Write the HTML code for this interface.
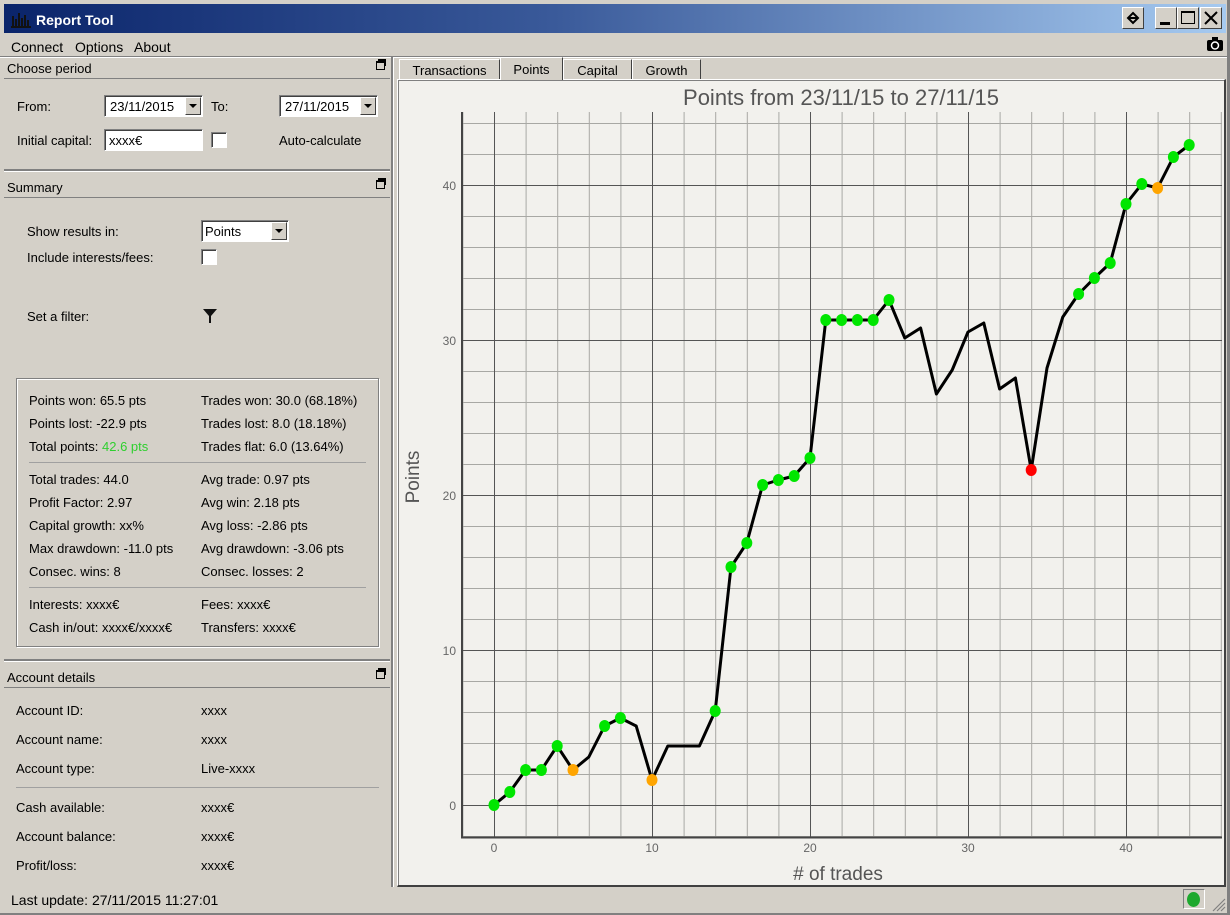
<!DOCTYPE html>
<html><head><meta charset="utf-8"><style>
*{margin:0;padding:0;box-sizing:border-box}
body{width:1230px;height:915px;background:#d4d0c8;font:13px "Liberation Sans",sans-serif;color:#000;position:relative;overflow:hidden}
.t{position:absolute;white-space:nowrap;line-height:16px;margin-top:1px}
.a{position:absolute}
.hdr{position:absolute;left:4px;width:386px;height:21px;border-bottom:1px solid #808080;}
.hdr span{position:absolute;left:3px;top:3px}
.fl{position:absolute;right:5px;top:3px;width:9px;height:9px;border:1px solid #000;border-top-width:2px}
.fl:before{content:"";position:absolute;left:1px;top:-4px;width:7px;height:5px;border:1px solid #000;border-top-width:2px;border-bottom:none;border-left:none}
.combo{position:absolute;background:#fff;border:1px solid #808080;border-right-color:#fff;border-bottom-color:#fff;box-shadow:inset 1px 1px 0 #404040}
.combo .b{position:absolute;right:1px;top:1px;bottom:1px;width:16px;background:#d4d0c8;border:1px solid #fff;border-right-color:#404040;border-bottom-color:#404040}
.combo .b:after{content:"";position:absolute;left:3px;top:6px;border:4px solid transparent;border-top:4px solid #000;border-bottom:none}
.chk{position:absolute;width:14px;height:14px;background:#fff;border:1px solid #808080;border-right-color:#fff;border-bottom-color:#fff;box-shadow:inset 1px 1px 0 #404040}
.tab{position:absolute;height:21px;border:1px solid #fff;border-right-color:#404040;border-bottom:none;text-align:center;line-height:22px;background:#d4d0c8}
.sep{position:absolute;height:1px;background:#a0a0a0}
</style></head><body>
<div class="a" style="left:4px;top:4px;width:1222px;height:29px;background:linear-gradient(90deg,#0a246a 0%,#3a5a9a 45%,#a6caf0 100%)"></div>
<svg class="a" style="left:10px;top:10px" width="22" height="18"><path d="M1 17h20M3 17V6M6 17V9M9 17V3M12 17V8M15 17V5M18 17V10" stroke="#111" stroke-width="2"/></svg>
<div class="t" style="left:36px;top:11px;color:#fff;font-weight:bold;font-size:14px">Report Tool</div>
<div class="a" style="left:1122px;top:7px;width:22px;height:22px;background:#d4d0c8;border:1px solid #fff;border-right-color:#404040;border-bottom-color:#404040"></div>
<svg class="a" style="left:1125px;top:10px" width="16" height="16"><path d="M8 3L13 8L8 13L3 8Z" fill="none" stroke="#000" stroke-width="2"/><path d="M3 8H13" stroke="#000" stroke-width="2"/></svg>
<div class="a" style="left:1155px;top:7px;width:22px;height:22px;background:#d4d0c8;border:1px solid #fff;border-right-color:#404040;border-bottom-color:#404040"></div>
<div class="a" style="left:1160px;top:22px;width:10px;height:3px;background:#000"></div>
<div class="a" style="left:1177px;top:7px;width:22px;height:22px;background:#d4d0c8;border:1px solid #fff;border-right-color:#404040;border-bottom-color:#404040"></div>
<div class="a" style="left:1181px;top:11px;width:14px;height:13px;border:1px solid #000;border-top-width:2px"></div>
<div class="a" style="left:1200px;top:7px;width:22px;height:22px;background:#d4d0c8;border:1px solid #fff;border-right-color:#404040;border-bottom-color:#404040"></div>
<svg class="a" style="left:1203px;top:10px" width="16" height="16"><path d="M2 2L14 14M14 2L2 14" stroke="#000" stroke-width="2"/></svg>
<div class="t" style="left:11px;top:38px;font-size:14px">Connect</div>
<div class="t" style="left:75px;top:38px;font-size:14px">Options</div>
<div class="t" style="left:134px;top:38px;font-size:14px">About</div>
<svg class="a" style="left:1207px;top:37px" width="16" height="14"><rect x="0" y="3" width="16" height="11" rx="2" fill="#000"/><rect x="5" y="0" width="6" height="4" fill="#000"/><circle cx="8" cy="8.5" r="3.5" fill="none" stroke="#fff" stroke-width="1.5"/></svg>
<div class="a" style="left:0;top:56px;width:1230px;height:1px;background:#808080"></div>
<div class="a" style="left:0;top:57px;width:1230px;height:1px;background:#fff"></div>
<div class="a" style="left:391px;top:57px;width:2px;height:830px;background:#808080"></div>
<div class="a" style="left:393px;top:57px;width:1px;height:830px;background:#fff"></div>
<div class="hdr" style="top:58px"><span>Choose period</span><div class="fl"></div></div>
<div class="t" style="left:17px;top:98px">From:</div>
<div class="combo" style="left:104px;top:95px;width:99px;height:22px"><span class="t" style="left:5px;top:2px">23/11/2015</span><div class="b"></div></div>
<div class="t" style="left:211px;top:98px">To:</div>
<div class="combo" style="left:279px;top:95px;width:99px;height:22px"><span class="t" style="left:5px;top:2px">27/11/2015</span><div class="b"></div></div>
<div class="t" style="left:17px;top:132px">Initial capital:</div>
<div class="combo" style="left:104px;top:129px;width:99px;height:22px"><span class="t" style="left:4px;top:2px">xxxx€</span></div>
<div class="chk" style="left:211px;top:132px;width:16px;height:16px"></div>
<div class="t" style="left:279px;top:132px">Auto-calculate</div>
<div class="a" style="left:4px;top:169px;width:386px;height:2px;background:#808080"></div>
<div class="a" style="left:4px;top:171px;width:386px;height:1px;background:#fff"></div>
<div class="hdr" style="top:177px"><span>Summary</span><div class="fl"></div></div>
<div class="t" style="left:27px;top:223px">Show results in:</div>
<div class="combo" style="left:201px;top:220px;width:88px;height:22px"><span class="t" style="left:3px;top:2px">Points</span><div class="b"></div></div>
<div class="t" style="left:27px;top:249px">Include interests/fees:</div>
<div class="chk" style="left:201px;top:249px;width:16px;height:16px"></div>
<div class="t" style="left:27px;top:308px">Set a filter:</div>
<svg class="a" style="left:202px;top:308px" width="16" height="16"><path d="M1 1H15L9 8V15H7V8Z" fill="#111"/></svg>
<div class="a" style="left:16px;top:378px;width:363px;height:269px;border:1px solid #808080;box-shadow:inset 1px 1px 0 #fff,1px 1px 0 #fff"></div>
<div class="t" style="left:29px;top:392px">Points won: 65.5 pts</div>
<div class="t" style="left:201px;top:392px">Trades won: 30.0 (68.18%)</div>
<div class="t" style="left:29px;top:415px">Points lost: -22.9 pts</div>
<div class="t" style="left:201px;top:415px">Trades lost: 8.0 (18.18%)</div>
<div class="t" style="left:29px;top:438px">Total points: <span style="color:#2fcf2f">42.6 pts</span></div>
<div class="t" style="left:201px;top:438px">Trades flat: 6.0 (13.64%)</div>
<div class="sep" style="left:29px;top:462px;width:337px"></div>
<div class="t" style="left:29px;top:471px">Total trades: 44.0</div>
<div class="t" style="left:201px;top:471px">Avg trade: 0.97 pts</div>
<div class="t" style="left:29px;top:494px">Profit Factor: 2.97</div>
<div class="t" style="left:201px;top:494px">Avg win: 2.18 pts</div>
<div class="t" style="left:29px;top:517px">Capital growth: xx%</div>
<div class="t" style="left:201px;top:517px">Avg loss: -2.86 pts</div>
<div class="t" style="left:29px;top:540px">Max drawdown: -11.0 pts</div>
<div class="t" style="left:201px;top:540px">Avg drawdown: -3.06 pts</div>
<div class="t" style="left:29px;top:563px">Consec. wins: 8</div>
<div class="t" style="left:201px;top:563px">Consec. losses: 2</div>
<div class="sep" style="left:29px;top:587px;width:337px"></div>
<div class="t" style="left:29px;top:596px">Interests: xxxx€</div>
<div class="t" style="left:201px;top:596px">Fees: xxxx€</div>
<div class="t" style="left:29px;top:619px">Cash in/out: xxxx€/xxxx€</div>
<div class="t" style="left:201px;top:619px">Transfers: xxxx€</div>
<div class="a" style="left:4px;top:659px;width:386px;height:2px;background:#808080"></div>
<div class="a" style="left:4px;top:661px;width:386px;height:1px;background:#fff"></div>
<div class="hdr" style="top:667px"><span>Account details</span><div class="fl"></div></div>
<div class="t" style="left:16px;top:702px">Account ID:</div><div class="t" style="left:201px;top:702px">xxxx</div>
<div class="t" style="left:16px;top:731px">Account name:</div><div class="t" style="left:201px;top:731px">xxxx</div>
<div class="t" style="left:16px;top:760px">Account type:</div><div class="t" style="left:201px;top:760px">Live-xxxx</div>
<div class="sep" style="left:16px;top:787px;width:363px"></div>
<div class="t" style="left:16px;top:799px">Cash available:</div><div class="t" style="left:201px;top:799px">xxxx€</div>
<div class="t" style="left:16px;top:828px">Account balance:</div><div class="t" style="left:201px;top:828px">xxxx€</div>
<div class="t" style="left:16px;top:857px">Profit/loss:</div><div class="t" style="left:201px;top:857px">xxxx€</div>
<div class="t" style="left:11px;top:891px;font-size:14px">Last update: 27/11/2015 11:27:01</div>
<div class="a" style="left:1183px;top:889px;width:22px;height:20px;border:1px solid #808080;border-right-color:#fff;border-bottom-color:#fff"></div>
<div class="a" style="left:1187px;top:892px;width:13px;height:15px;border-radius:50%;background:#1ea82e"></div>
<svg class="a" style="left:1212px;top:898px" width="14" height="14"><path d="M13 1L1 13M13 5L5 13M13 9L9 13" stroke="#808080" stroke-width="1.2"/></svg>
<div class="a" style="left:0;top:913px;width:1230px;height:2px;background:#808080"></div>
<div class="a" style="left:1227px;top:0;width:3px;height:915px;background:#808080"></div>
<div class="tab" style="left:399px;top:59px;width:101px">Transactions</div>
<div class="tab" style="left:632px;top:59px;width:69px">Growth</div>
<div class="tab" style="left:563px;top:59px;width:69px">Capital</div>
<div class="tab" style="left:500px;top:57px;width:63px;height:23px;z-index:2;line-height:24px">Points</div>
<div class="a" style="left:397px;top:79px;width:829px;height:808px;background:#f2f1ed;border:1px solid #fff;border-right:2px solid #404040;border-bottom:2px solid #404040;box-shadow:inset 1px 1px 0 #808080"></div>
<svg class="a" style="left:0;top:0" width="1230" height="915">
<defs><pattern id="g" patternUnits="userSpaceOnUse" x="494" y="805" width="31.6" height="31"><path d="M0.5 0V31M0 0.5H31.6" stroke="#a8a8a4" stroke-width="1" fill="none"/></pattern></defs>
<rect x="462" y="112" width="760" height="725" fill="url(#g)"/>
<g stroke="#555" stroke-width="1">
<path d="M494.5 112V837M652.5 112V837M810.5 112V837M968.5 112V837M1126.5 112V837M462 805.5H1222M462 650.5H1222M462 495.5H1222M462 340.5H1222M462 185.5H1222"/>
</g>
<path d="M462 112V837.5H1222" stroke="#444" stroke-width="2" fill="none"/>
<g fill="#666" font-size="12" font-family="Liberation Sans,sans-serif" text-anchor="end">
<text x="456" y="810">0</text><text x="456" y="655">10</text><text x="456" y="500">20</text><text x="456" y="345">30</text><text x="456" y="190">40</text>
</g>
<g fill="#666" font-size="12" font-family="Liberation Sans,sans-serif" text-anchor="middle">
<text x="494" y="852">0</text><text x="652" y="852">10</text><text x="810" y="852">20</text><text x="968" y="852">30</text><text x="1126" y="852">40</text>
</g>
<text x="841" y="105" text-anchor="middle" fill="#555" font-size="22" font-family="Liberation Sans,sans-serif">Points from 23/11/15 to 27/11/15</text>
<text x="838" y="880" text-anchor="middle" fill="#555" font-size="19" font-family="Liberation Sans,sans-serif"># of trades</text>
<text transform="translate(419 477) rotate(-90)" text-anchor="middle" fill="#555" font-size="19" font-family="Liberation Sans,sans-serif">Points</text>
<polyline fill="none" stroke="#000" stroke-width="3" stroke-linejoin="round" points="494,805 509.8,792 525.6,770 541.4,770 557.2,746 573,770 588.8,757 604.6,726 620.4,718 636.2,726 652,780 667.8,746 683.6,746 699.4,746 715.2,711 731,567 746.8,543 762.6,485 778.4,480 794.2,476 810,458 825.8,320 841.6,320 857.4,320 873.2,320 889,300 904.8,338 920.6,328 936.4,394 952.2,370 968,332 983.8,323 999.6,389 1015.4,378 1031.2,470 1047,368 1062.8,317 1078.6,294 1094.4,278 1110.2,263 1126,204 1141.8,184 1157.6,188 1173.4,157 1189.2,145"/>
<g fill="#00e600">
<ellipse cx="494" cy="805" rx="5.5" ry="6"/><ellipse cx="509.8" cy="792" rx="5.5" ry="6"/><ellipse cx="525.6" cy="770" rx="5.5" ry="6"/><ellipse cx="541.4" cy="770" rx="5.5" ry="6"/><ellipse cx="557.2" cy="746" rx="5.5" ry="6"/><ellipse cx="604.6" cy="726" rx="5.5" ry="6"/><ellipse cx="620.4" cy="718" rx="5.5" ry="6"/><ellipse cx="715.2" cy="711" rx="5.5" ry="6"/><ellipse cx="731" cy="567" rx="5.5" ry="6"/><ellipse cx="746.8" cy="543" rx="5.5" ry="6"/><ellipse cx="762.6" cy="485" rx="5.5" ry="6"/><ellipse cx="778.4" cy="480" rx="5.5" ry="6"/><ellipse cx="794.2" cy="476" rx="5.5" ry="6"/><ellipse cx="810" cy="458" rx="5.5" ry="6"/><ellipse cx="825.8" cy="320" rx="5.5" ry="6"/><ellipse cx="841.6" cy="320" rx="5.5" ry="6"/><ellipse cx="857.4" cy="320" rx="5.5" ry="6"/><ellipse cx="873.2" cy="320" rx="5.5" ry="6"/><ellipse cx="889" cy="300" rx="5.5" ry="6"/><ellipse cx="1078.6" cy="294" rx="5.5" ry="6"/><ellipse cx="1094.4" cy="278" rx="5.5" ry="6"/><ellipse cx="1110.2" cy="263" rx="5.5" ry="6"/><ellipse cx="1126" cy="204" rx="5.5" ry="6"/><ellipse cx="1141.8" cy="184" rx="5.5" ry="6"/><ellipse cx="1173.4" cy="157" rx="5.5" ry="6"/><ellipse cx="1189.2" cy="145" rx="5.5" ry="6"/>
</g>
<g fill="#ffa500"><ellipse cx="573" cy="770" rx="5.5" ry="6"/><ellipse cx="652" cy="780" rx="5.5" ry="6"/><ellipse cx="1157.6" cy="188" rx="5.5" ry="6"/></g>
<ellipse cx="1031.2" cy="470" rx="5.5" ry="6" fill="#f00"/>
</svg>
</body></html>
